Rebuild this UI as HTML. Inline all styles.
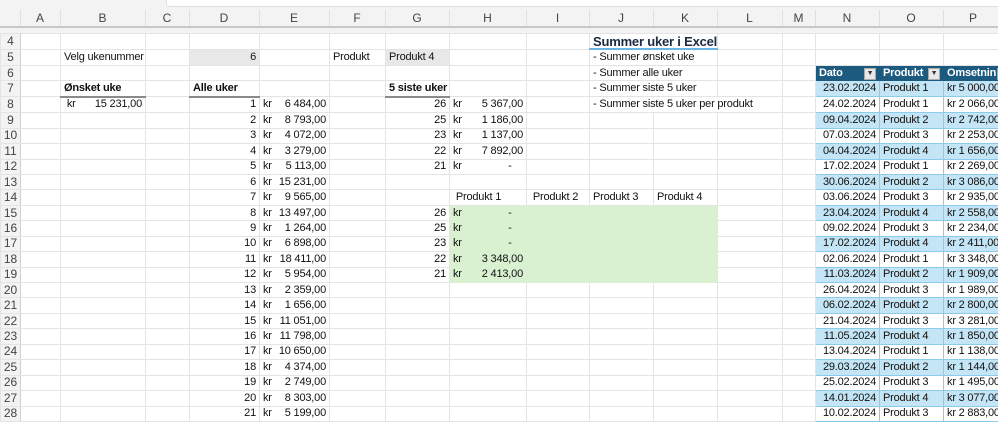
<!DOCTYPE html>
<html><head><meta charset="utf-8">
<style>
html,body{margin:0;padding:0;width:998px;height:417px;overflow:hidden;background:#fff;font-family:"Liberation Sans",Arial,sans-serif;}
#top{position:absolute;left:0;top:0;width:998px;height:33px;background:#f3f3f3;}
#fbar{position:absolute;left:166px;top:-2px;width:840px;height:7px;background:#fff;border:1px solid #dedede;border-radius:3px;}
table{width:1003px;}
#colh{position:absolute;left:0;top:10px;border-collapse:collapse;table-layout:fixed;}
#colh td{height:16px;padding:0;text-align:center;font-size:12px;color:#444;border-right:1px solid #e0e0e0;border-bottom:2px solid #c8c8c8;}
#grid{position:absolute;left:0;top:33px;border-collapse:collapse;table-layout:fixed;}
#grid td{height:14.45px;padding:0 3px;font-size:11px;letter-spacing:-0.2px;color:#111;white-space:nowrap;overflow:hidden;border:1px solid #e4e4e4;line-height:13px;}
#grid td.rh{background:#f3f3f3;color:#444;text-align:center;padding:0;font-size:12px;letter-spacing:0;border-color:#e4e4e4 #d0d0d0 #e4e4e4 #e4e4e4;}
.r{text-align:right;}
.b{font-weight:bold;}
.ul{border-bottom:2px solid #8a8a8a !important;}
.g{background:#e8e8e8;}
.gr{background:#d9f1d1;border-color:#d9f1d1 !important;}
.kr{display:flex;justify-content:space-between;}
.hd{background:#1d5a7f;color:#fff !important;font-weight:bold;border-color:#1d5a7f !important;position:relative;}
.dd{position:absolute;right:3px;top:2px;width:10px;height:10px;background:#e8e8e8;border:1px solid #aaa;font-size:7px;color:#333;text-align:center;line-height:10px;}
.lb{background:#c3e5f6;border-color:#8ccbec !important;}
.wb{background:#fff;border-color:#8ccbec !important;}
.tt{font-size:13px !important;font-weight:bold;color:#1a2a40 !important;border-bottom:2px solid #6bb6e6 !important;}
</style></head><body>
<div id="top"><div id="fbar"></div></div>
<table id="colh"><colgroup>
<col style="width:20px"><col style="width:40px"><col style="width:85px"><col style="width:44px"><col style="width:70px"><col style="width:70px"><col style="width:56px"><col style="width:64px"><col style="width:77px"><col style="width:63px"><col style="width:64px"><col style="width:64px"><col style="width:65px"><col style="width:33px"><col style="width:64px"><col style="width:64px"><col style="width:60px">
</colgroup><tr><td></td><td>A</td><td>B</td><td>C</td><td>D</td><td>E</td><td>F</td><td>G</td><td>H</td><td>I</td><td>J</td><td>K</td><td>L</td><td>M</td><td>N</td><td>O</td><td>P</td></tr></table>
<table id="grid"><colgroup>
<col style="width:20px"><col style="width:40px"><col style="width:85px"><col style="width:44px"><col style="width:70px"><col style="width:70px"><col style="width:56px"><col style="width:64px"><col style="width:77px"><col style="width:63px"><col style="width:64px"><col style="width:64px"><col style="width:65px"><col style="width:33px"><col style="width:64px"><col style="width:64px"><col style="width:60px">
</colgroup>
<tr><td class="rh">4</td><td></td><td></td><td></td><td></td><td></td><td></td><td></td><td></td><td></td><td colspan="2" class="tt">Summer uker i Excel</td><td></td><td></td><td></td><td></td><td></td></tr>
<tr><td class="rh">5</td><td></td><td>Velg ukenummer</td><td></td><td class="r g">6</td><td></td><td>Produkt</td><td class="g">Produkt 4</td><td></td><td></td><td colspan="2">- Summer ønsket uke</td><td></td><td></td><td></td><td></td><td></td></tr>
<tr><td class="rh">6</td><td></td><td></td><td></td><td></td><td></td><td></td><td></td><td></td><td></td><td colspan="2">- Summer alle uker</td><td></td><td></td><td class="hd">Dato<span class="dd">▼</span></td><td class="hd">Produkt<span class="dd">▼</span></td><td class="hd">Omsetnin<span class="dd" style="right:-6px">▼</span></td></tr>
<tr><td class="rh">7</td><td></td><td class="b ul">Ønsket uke</td><td></td><td class="b ul">Alle uker</td><td></td><td></td><td class="b ul">5 siste uker</td><td></td><td></td><td colspan="2">- Summer siste 5 uker</td><td></td><td></td><td class="r lb">23.02.2024</td><td class="lb">Produkt 1</td><td class="lb">kr 5 000,00</td></tr>
<tr><td class="rh">8</td><td></td><td><div class="kr"><span>&nbsp;kr</span><span>15 231,00</span></div></td><td></td><td class="r">1</td><td><div class="kr"><span>kr</span><span>6 484,00</span></div></td><td></td><td class="r">26</td><td><div class="kr"><span>kr</span><span>5 367,00</span></div></td><td></td><td colspan="3">- Summer siste 5 uker per produkt</td><td></td><td class="r wb">24.02.2024</td><td class="wb">Produkt 1</td><td class="wb">kr 2 066,00</td></tr>
<tr><td class="rh">9</td><td></td><td></td><td></td><td class="r">2</td><td><div class="kr"><span>kr</span><span>8 793,00</span></div></td><td></td><td class="r">25</td><td><div class="kr"><span>kr</span><span>1 186,00</span></div></td><td></td><td></td><td></td><td></td><td></td><td class="r lb">09.04.2024</td><td class="lb">Produkt 2</td><td class="lb">kr 2 742,00</td></tr>
<tr><td class="rh">10</td><td></td><td></td><td></td><td class="r">3</td><td><div class="kr"><span>kr</span><span>4 072,00</span></div></td><td></td><td class="r">23</td><td><div class="kr"><span>kr</span><span>1 137,00</span></div></td><td></td><td></td><td></td><td></td><td></td><td class="r wb">07.03.2024</td><td class="wb">Produkt 3</td><td class="wb">kr 2 253,00</td></tr>
<tr><td class="rh">11</td><td></td><td></td><td></td><td class="r">4</td><td><div class="kr"><span>kr</span><span>3 279,00</span></div></td><td></td><td class="r">22</td><td><div class="kr"><span>kr</span><span>7 892,00</span></div></td><td></td><td></td><td></td><td></td><td></td><td class="r lb">04.04.2024</td><td class="lb">Produkt 4</td><td class="lb">kr 1 656,00</td></tr>
<tr><td class="rh">12</td><td></td><td></td><td></td><td class="r">5</td><td><div class="kr"><span>kr</span><span>5 113,00</span></div></td><td></td><td class="r">21</td><td><div class="kr"><span>kr</span><span>-&nbsp;&nbsp;&nbsp;&nbsp;</span></div></td><td></td><td></td><td></td><td></td><td></td><td class="r wb">17.02.2024</td><td class="wb">Produkt 1</td><td class="wb">kr 2 269,00</td></tr>
<tr><td class="rh">13</td><td></td><td></td><td></td><td class="r">6</td><td><div class="kr"><span>kr</span><span>15 231,00</span></div></td><td></td><td></td><td></td><td></td><td></td><td></td><td></td><td></td><td class="r lb">30.06.2024</td><td class="lb">Produkt 2</td><td class="lb">kr 3 086,00</td></tr>
<tr><td class="rh">14</td><td></td><td></td><td></td><td class="r">7</td><td><div class="kr"><span>kr</span><span>9 565,00</span></div></td><td></td><td></td><td>&nbsp;Produkt 1</td><td>&nbsp;Produkt 2</td><td>Produkt 3</td><td>Produkt 4</td><td></td><td></td><td class="r wb">03.06.2024</td><td class="wb">Produkt 3</td><td class="wb">kr 2 935,00</td></tr>
<tr><td class="rh">15</td><td></td><td></td><td></td><td class="r">8</td><td><div class="kr"><span>kr</span><span>13 497,00</span></div></td><td></td><td class="r">26</td><td class="gr"><div class="kr"><span>kr</span><span>-&nbsp;&nbsp;&nbsp;&nbsp;</span></div></td><td class="gr"></td><td class="gr"></td><td class="gr"></td><td></td><td></td><td class="r lb">23.04.2024</td><td class="lb">Produkt 4</td><td class="lb">kr 2 558,00</td></tr>
<tr><td class="rh">16</td><td></td><td></td><td></td><td class="r">9</td><td><div class="kr"><span>kr</span><span>1 264,00</span></div></td><td></td><td class="r">25</td><td class="gr"><div class="kr"><span>kr</span><span>-&nbsp;&nbsp;&nbsp;&nbsp;</span></div></td><td class="gr"></td><td class="gr"></td><td class="gr"></td><td></td><td></td><td class="r wb">09.02.2024</td><td class="wb">Produkt 3</td><td class="wb">kr 2 234,00</td></tr>
<tr><td class="rh">17</td><td></td><td></td><td></td><td class="r">10</td><td><div class="kr"><span>kr</span><span>6 898,00</span></div></td><td></td><td class="r">23</td><td class="gr"><div class="kr"><span>kr</span><span>-&nbsp;&nbsp;&nbsp;&nbsp;</span></div></td><td class="gr"></td><td class="gr"></td><td class="gr"></td><td></td><td></td><td class="r lb">17.02.2024</td><td class="lb">Produkt 4</td><td class="lb">kr 2 411,00</td></tr>
<tr><td class="rh">18</td><td></td><td></td><td></td><td class="r">11</td><td><div class="kr"><span>kr</span><span>18 411,00</span></div></td><td></td><td class="r">22</td><td class="gr"><div class="kr"><span>kr</span><span>3 348,00</span></div></td><td class="gr"></td><td class="gr"></td><td class="gr"></td><td></td><td></td><td class="r wb">02.06.2024</td><td class="wb">Produkt 1</td><td class="wb">kr 3 348,00</td></tr>
<tr><td class="rh">19</td><td></td><td></td><td></td><td class="r">12</td><td><div class="kr"><span>kr</span><span>5 954,00</span></div></td><td></td><td class="r">21</td><td class="gr"><div class="kr"><span>kr</span><span>2 413,00</span></div></td><td class="gr"></td><td class="gr"></td><td class="gr"></td><td></td><td></td><td class="r lb">11.03.2024</td><td class="lb">Produkt 2</td><td class="lb">kr 1 909,00</td></tr>
<tr><td class="rh">20</td><td></td><td></td><td></td><td class="r">13</td><td><div class="kr"><span>kr</span><span>2 359,00</span></div></td><td></td><td></td><td></td><td></td><td></td><td></td><td></td><td></td><td class="r wb">26.04.2024</td><td class="wb">Produkt 3</td><td class="wb">kr 1 989,00</td></tr>
<tr><td class="rh">21</td><td></td><td></td><td></td><td class="r">14</td><td><div class="kr"><span>kr</span><span>1 656,00</span></div></td><td></td><td></td><td></td><td></td><td></td><td></td><td></td><td></td><td class="r lb">06.02.2024</td><td class="lb">Produkt 2</td><td class="lb">kr 2 800,00</td></tr>
<tr><td class="rh">22</td><td></td><td></td><td></td><td class="r">15</td><td><div class="kr"><span>kr</span><span>11 051,00</span></div></td><td></td><td></td><td></td><td></td><td></td><td></td><td></td><td></td><td class="r wb">21.04.2024</td><td class="wb">Produkt 3</td><td class="wb">kr 3 281,00</td></tr>
<tr><td class="rh">23</td><td></td><td></td><td></td><td class="r">16</td><td><div class="kr"><span>kr</span><span>11 798,00</span></div></td><td></td><td></td><td></td><td></td><td></td><td></td><td></td><td></td><td class="r lb">11.05.2024</td><td class="lb">Produkt 4</td><td class="lb">kr 1 850,00</td></tr>
<tr><td class="rh">24</td><td></td><td></td><td></td><td class="r">17</td><td><div class="kr"><span>kr</span><span>10 650,00</span></div></td><td></td><td></td><td></td><td></td><td></td><td></td><td></td><td></td><td class="r wb">13.04.2024</td><td class="wb">Produkt 1</td><td class="wb">kr 1 138,00</td></tr>
<tr><td class="rh">25</td><td></td><td></td><td></td><td class="r">18</td><td><div class="kr"><span>kr</span><span>4 374,00</span></div></td><td></td><td></td><td></td><td></td><td></td><td></td><td></td><td></td><td class="r lb">29.03.2024</td><td class="lb">Produkt 2</td><td class="lb">kr 1 144,00</td></tr>
<tr><td class="rh">26</td><td></td><td></td><td></td><td class="r">19</td><td><div class="kr"><span>kr</span><span>2 749,00</span></div></td><td></td><td></td><td></td><td></td><td></td><td></td><td></td><td></td><td class="r wb">25.02.2024</td><td class="wb">Produkt 3</td><td class="wb">kr 1 495,00</td></tr>
<tr><td class="rh">27</td><td></td><td></td><td></td><td class="r">20</td><td><div class="kr"><span>kr</span><span>8 303,00</span></div></td><td></td><td></td><td></td><td></td><td></td><td></td><td></td><td></td><td class="r lb">14.01.2024</td><td class="lb">Produkt 4</td><td class="lb">kr 3 077,00</td></tr>
<tr><td class="rh">28</td><td></td><td></td><td></td><td class="r">21</td><td><div class="kr"><span>kr</span><span>5 199,00</span></div></td><td></td><td></td><td></td><td></td><td></td><td></td><td></td><td></td><td class="r wb">10.02.2024</td><td class="wb">Produkt 3</td><td class="wb">kr 2 883,00</td></tr>
</table>
</body></html>
